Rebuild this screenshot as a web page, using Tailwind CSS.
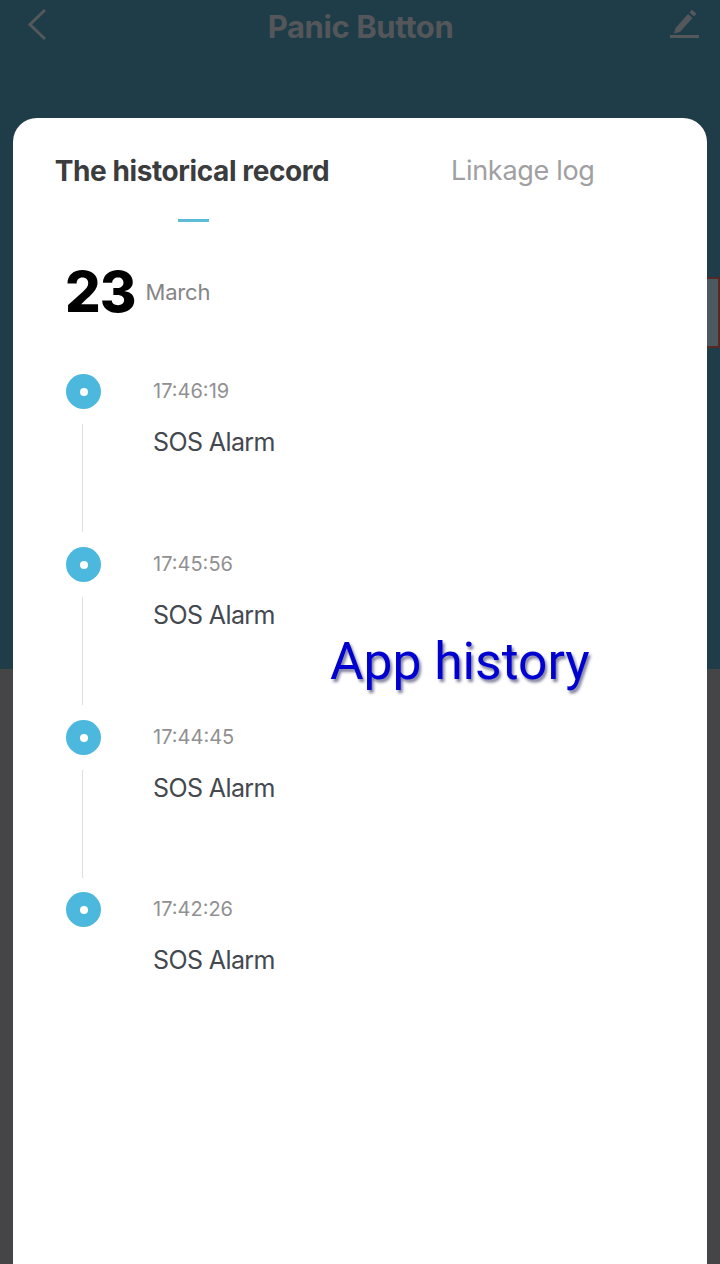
<!DOCTYPE html>
<html lang="en">
<head>
    <meta charset="UTF-8">
    <meta name="viewport" content="width=device-width, initial-scale=1.0">
    <script src="https://cdn.jsdelivr.net/npm/@tailwindcss/browser@4"></script>
    <title>Panic Button</title>
</head>
<body class="bg-[#454547]">
    <div class="relative w-[720px] h-[1264px] overflow-hidden bg-[linear-gradient(#1e3d48_669px,#454547_669px)] font-['Inter',sans-serif]">
        <!-- Header -->
        <header class="h-[118px] flex justify-between items-start pl-[27px] pr-[18px] pt-[9px]">
            <svg class="w-[20px] h-[32px]" viewBox="0 0 20 32" fill="none" stroke="#55585b" stroke-width="3"><path d="M18 1 3 15.500 18 30"/></svg>
            <h1 class="ml-[4px] text-[31px] leading-[36px] font-bold text-[#55565a] tracking-[-0.4px]">Panic Button</h1>
            <svg class="w-[32px] h-[32px]" viewBox="0 0 32 32" fill="#55585b"><path d="M4 24.500l1.500-5.500L18 5l4.500 4L10 23z"/><path d="M19.500 3.500 22 .8l4.500 4L24 7.500z"/><rect x="0" y="26" width="29" height="3"/></svg>
        </header>

        <!-- Sheet -->
        <main class="mx-[13px] h-[1146px] bg-white rounded-t-[24px]">
            <div class="flex h-[104px]">
                <div class="w-[358px] flex flex-col items-center">
                    <span class="mt-[35px] text-[28px] leading-[36px] font-bold text-[#3b3c3e] tracking-[-0.4px] whitespace-nowrap">The historical record</span>
                    <span class="mt-[30px] w-[31px] h-[3px] bg-[#5cbcd8] ml-[3px]"></span>
                </div>
                <span class="mt-[35px] ml-[80px] text-[27px] leading-[36px] text-[#a0a0a2] tracking-[-0.3px] whitespace-nowrap">Linkage log</span>
            </div>

            <div class="flex items-center pl-[52px] h-[60px] mt-[40px]">
                <span class="text-[56px] leading-[60px] font-extrabold text-black tracking-[-1px]">23</span>
                <span class="ml-[10px] mt-[1px] text-[22px] tracking-[-0.2px] text-[#858587]">March</span>
            </div>

            <!-- Timeline -->
            <ul class="mt-[52px] pl-[53px]">
                <li class="h-[173px] flex">
                    <div class="w-[35px] flex flex-col">
                        <span class="w-[35px] h-[35px] rounded-full bg-[#4db8de] flex items-center justify-center"><span class="w-[8px] h-[8px] rounded-full bg-white"></span></span>
                        <span class="mt-[15px] ml-[16px] w-px h-[108px] bg-[#dfdfdf]"></span>
                    </div>
                    <div class="ml-[52px]">
                        <p class="text-[20px] leading-[35px] text-[#909092]">17:46:19</p>
                        <p class="mt-[15px] text-[25px] leading-[36px] text-[#44494f] tracking-[-0.6px]">SOS Alarm</p>
                    </div>
                </li>
                <li class="h-[173px] flex">
                    <div class="w-[35px] flex flex-col">
                        <span class="w-[35px] h-[35px] rounded-full bg-[#4db8de] flex items-center justify-center"><span class="w-[8px] h-[8px] rounded-full bg-white"></span></span>
                        <span class="mt-[15px] ml-[16px] w-px h-[108px] bg-[#dfdfdf]"></span>
                    </div>
                    <div class="ml-[52px]">
                        <p class="text-[20px] leading-[35px] text-[#909092]">17:45:56</p>
                        <p class="mt-[15px] text-[25px] leading-[36px] text-[#44494f] tracking-[-0.6px]">SOS Alarm</p>
                    </div>
                </li>
                <li class="h-[172px] flex">
                    <div class="w-[35px] flex flex-col">
                        <span class="w-[35px] h-[35px] rounded-full bg-[#4db8de] flex items-center justify-center"><span class="w-[8px] h-[8px] rounded-full bg-white"></span></span>
                        <span class="mt-[15px] ml-[16px] w-px h-[108px] bg-[#dfdfdf]"></span>
                    </div>
                    <div class="ml-[52px]">
                        <p class="text-[20px] leading-[35px] text-[#909092]">17:44:45</p>
                        <p class="mt-[15px] text-[25px] leading-[36px] text-[#44494f] tracking-[-0.6px]">SOS Alarm</p>
                    </div>
                </li>
                <li class="flex">
                    <div class="w-[35px] flex flex-col">
                        <span class="w-[35px] h-[35px] rounded-full bg-[#4db8de] flex items-center justify-center"><span class="w-[8px] h-[8px] rounded-full bg-white"></span></span>
                    </div>
                    <div class="ml-[52px]">
                        <p class="text-[20px] leading-[35px] text-[#909092]">17:42:26</p>
                        <p class="mt-[15px] text-[25px] leading-[36px] text-[#44494f] tracking-[-0.6px]">SOS Alarm</p>
                    </div>
                </li>
            </ul>
        </main>

        <!-- Sliver of the dimmed page behind the sheet -->
        <div class="absolute left-[707px] top-[277px] w-[13px] h-[71px] bg-[#4b5a5e] border-y-2 border-r-2 border-[#552a26]"></div>

        <!-- Annotation -->
        <span class="absolute left-[330px] top-[632px] text-[51.500px] leading-[60px] font-['Roboto',sans-serif] text-[#0000d0] [text-shadow:2px_3px_3px_#00003a80] whitespace-nowrap">App history</span>
    </div>
</body>
</html>
